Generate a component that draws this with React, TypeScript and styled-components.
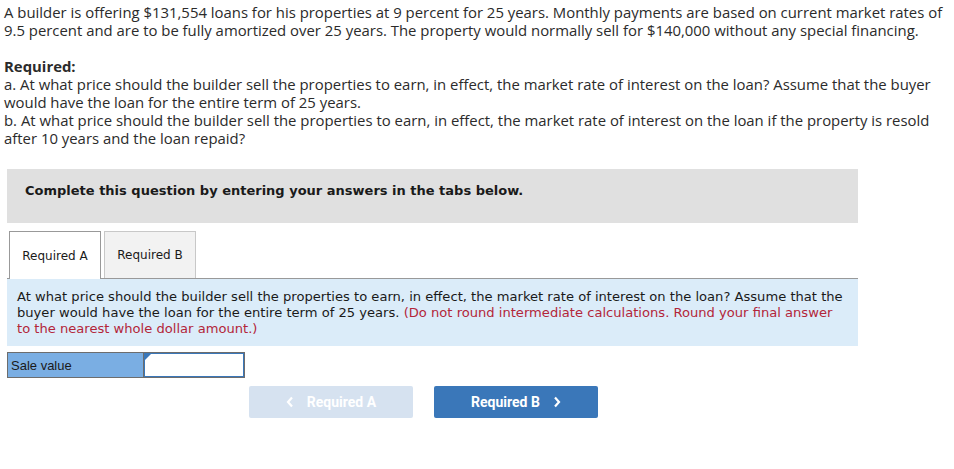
import React from "react";
import styled, { createGlobalStyle } from "styled-components";

const Global = createGlobalStyle`
  html, body { margin: 0; padding: 0; background: #fff; }
  body { width: 954px; }
`;

const Page = styled.div`
  padding: 3px 0 0 4px;
  width: 954px;
  box-sizing: border-box;
`;

const Question = styled.div`
  font-family: "Open Sans", "Liberation Sans", Arial, sans-serif;
  font-size: 14.9px;
  line-height: 18px;
  color: #2b2b2b;
  white-space: nowrap;
`;

const Para = styled.p`
  margin: 0;
`;

const RequiredHead = styled.p`
  margin: 18px 0 0;
  font-weight: bold;
`;

const Body = styled.div`
  padding-left: 3px;
  width: 851px;
`;

const Banner = styled.div`
  margin-top: 22px;
  height: 54px;
  box-sizing: border-box;
  background: #e0e0e0;
  padding: 14px 0 0 18px;
  font-family: Verdana, "DejaVu Sans", sans-serif;
  font-weight: bold;
  font-size: 13px;
  line-height: 16px;
  color: #1a1a1a;
`;

const Tabs = styled.div`
  margin-top: 8px;
  display: flex;
  gap: 3px;
  padding-left: 2px;
  border-bottom: 1px solid #999;
`;

const Tab = styled.div<{ $active?: boolean }>`
  width: 92px;
  box-sizing: border-box;
  display: flex;
  align-items: center;
  justify-content: center;
  font-family: Verdana, "DejaVu Sans", sans-serif;
  font-size: 12px;
  color: #1a1a1a;
  background: ${(p) => (p.$active ? "#fff" : "#f2f2f2")};
  border: 1px solid ${(p) => (p.$active ? "#999" : "#c8c8c8")};
  border-bottom: none;
  margin-bottom: ${(p) => (p.$active ? "-1px" : "0")};
  height: ${(p) => (p.$active ? "48px" : "47px")};
`;

const Panel = styled.div`
  background: #dbecf9;
  padding: 10px 0 9px 10px;
  font-family: Verdana, "DejaVu Sans", sans-serif;
  font-size: 13.1px;
  line-height: 16px;
  color: #1a1a1a;
  white-space: nowrap;
`;

const Note = styled.span`
  color: #b3263a;
`;

const AnswerRow = styled.div`
  margin-top: 6px;
  display: flex;
  width: 236px;
  height: 24px;
  border: 1px solid #6d6d6d;
`;

const Label = styled.div`
  width: 132px;
  background: #7aaee3;
  border-right: 1px solid #6d6d6d;
  display: flex;
  align-items: center;
  padding-left: 3px;
  font-family: "Liberation Sans", Arial, sans-serif;
  font-size: 13px;
  color: #1a1a1a;
`;

const InputCell = styled.div`
  position: relative;
  flex: 1;
  border: 1px solid #3a77b9;
  background: #fff;
`;

const Flag = styled.span`
  position: absolute;
  left: 0;
  top: 0;
  width: 0;
  height: 0;
  border-top: 6px solid #3a77b9;
  border-right: 6px solid transparent;
`;

const Nav = styled.div`
  margin-top: 8px;
  padding-left: 242px;
  display: flex;
  gap: 21px;
`;

const NavButton = styled.div<{ $primary?: boolean }>`
  width: 164px;
  height: 32px;
  border-radius: 2px;
  display: flex;
  align-items: center;
  justify-content: center;
  gap: 13px;
  font-family: Roboto, "Liberation Sans", sans-serif;
  font-weight: bold;
  font-size: 14px;
  color: #fff;
  background: ${(p) => (p.$primary ? "#3a77b9" : "#d6e2f0")};
`;

const Chevron = ({ dir }: { dir: "left" | "right" }) => (
  <svg width="8" height="12" viewBox="0 0 8 12">
    <path
      d={dir === "left" ? "M6 1.5 L2 6 L6 10.5" : "M2 1.5 L6 6 L2 10.5"}
      fill="none"
      stroke="#fff"
      strokeWidth="2.2"
    />
  </svg>
);

export default function App() {
  return (
    <>
      <Global />
      <Page>
        <Question>
          <Para>
            A builder is offering $131,554 loans for his properties at 9 percent for 25 years. Monthly payments are
            based on current market rates of
            <br />
            9.5 percent and are to be fully amortized over 25 years. The property would normally sell for $140,000
            without any special financing.
          </Para>
          <RequiredHead>Required:</RequiredHead>
          <Para>
            a. At what price should the builder sell the properties to earn, in effect, the market rate of interest on
            the loan? Assume that the buyer
            <br />
            would have the loan for the entire term of 25 years.
          </Para>
          <Para>
            b. At what price should the builder sell the properties to earn, in effect, the market rate of interest on
            the loan if the property is resold
            <br />
            after 10 years and the loan repaid?
          </Para>
        </Question>
        <Body>
          <Banner>Complete this question by entering your answers in the tabs below.</Banner>
          <Tabs>
            <Tab $active>Required A</Tab>
            <Tab>Required B</Tab>
          </Tabs>
          <Panel>
            At what price should the builder sell the properties to earn, in effect, the market rate of interest on the
            loan? Assume that the
            <br />
            buyer would have the loan for the entire term of 25 years.{" "}
            <Note>
              (Do not round intermediate calculations. Round your final answer
              <br />
              to the nearest whole dollar amount.)
            </Note>
          </Panel>
          <AnswerRow>
            <Label>Sale value</Label>
            <InputCell>
              <Flag />
            </InputCell>
          </AnswerRow>
          <Nav>
            <NavButton>
              <Chevron dir="left" />
              Required A
            </NavButton>
            <NavButton $primary>
              Required B
              <Chevron dir="right" />
            </NavButton>
          </Nav>
        </Body>
      </Page>
    </>
  );
}
